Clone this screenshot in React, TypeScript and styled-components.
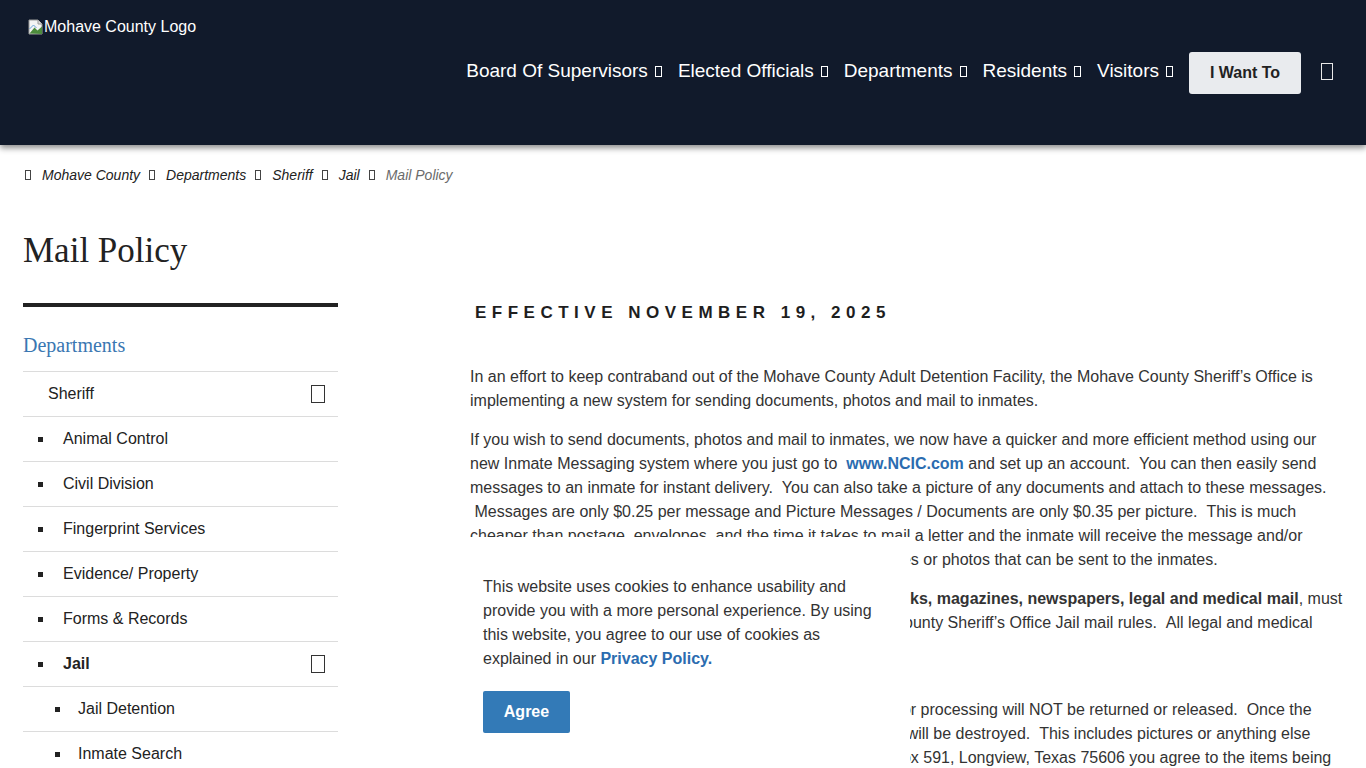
import React from 'react';
import styled, { createGlobalStyle } from 'styled-components';

const GlobalStyle = createGlobalStyle`
  body {
    margin: 0;
    font-family: "Liberation Sans", Arial, sans-serif;
    color: #333;
    background: #fff;
    overflow: hidden;
  }
  * { box-sizing: border-box; }
`;

const Header = styled.header`
  height: 145px;
  background: #111a2b;
  box-shadow: 0 3px 6px rgba(0, 0, 0, 0.45);
  display: flex;
  justify-content: space-between;
  align-items: flex-start;
  padding: 0 33px 0 28px;
  position: relative;
  z-index: 2;
`;

const Logo = styled.div`
  margin-top: 17px;
  display: flex;
  align-items: center;
  color: #fff;
  font-size: 16px;
  line-height: 20px;
`;

const Nav = styled.nav`
  margin-top: 52px;
  height: 42px;
  display: flex;
  align-items: center;
`;

const NavItem = styled.a`
  display: flex;
  align-items: center;
  gap: 7px;
  margin-right: 16px;
  padding-bottom: 4px;
  color: #fff;
  font-size: 19px;
  white-space: nowrap;
  cursor: pointer;
`;

// missing icon-font glyph, drawn as the browser's empty box
const Tofu = styled.span<{ $w: number; $h: number; $color?: string }>`
  display: inline-block;
  flex: none;
  width: ${({ $w }) => $w}px;
  height: ${({ $h }) => $h}px;
  border: 1px solid ${({ $color }) => $color || 'currentColor'};
`;

const WantButton = styled.button`
  width: 112px;
  height: 42px;
  background: #e9ebee;
  border: none;
  border-radius: 3px;
  color: #222;
  font-family: inherit;
  font-size: 16px;
  font-weight: 700;
  cursor: pointer;
`;

const SearchToggle = styled.span`
  margin-left: 20px;
  padding-bottom: 3px;
  display: flex;
  color: #e8e8e8;
`;

const Breadcrumbs = styled.ol`
  list-style: none;
  margin: 0;
  padding: 20px 0 0 25px;
  display: flex;
  align-items: center;
  font-size: 14px;
  line-height: 20px;
  font-style: italic;
`;

const Crumb = styled.li<{ $current?: boolean }>`
  display: flex;
  align-items: center;
  gap: 11px;
  margin-right: 9px;
  color: ${({ $current }) => ($current ? '#6b6b6b' : '#222')};
`;

const PageTitle = styled.h1`
  margin: 46px 0 0 23px;
  font-family: "Liberation Serif", "Times New Roman", serif;
  font-weight: 400;
  font-size: 35px;
  line-height: 40px;
  color: #222;
`;

const Layout = styled.div`
  display: grid;
  grid-template-columns: 315px 1fr;
  column-gap: 132px;
  padding: 0 23px;
  margin-top: 27px;
`;

const Sidebar = styled.aside`
  padding-top: 5px;
`;

const SideBar = styled.div`
  height: 4px;
  background: #222;
`;

const SideTitle = styled.a`
  display: block;
  margin: 26px 0 14px;
  font-family: "Liberation Serif", "Times New Roman", serif;
  font-size: 20px;
  line-height: 24px;
  color: #3a77b2;
`;

const SideList = styled.ul`
  list-style: none;
  margin: 0;
  padding: 0;
`;

const SideRow = styled.li<{ $level: number; $bold?: boolean }>`
  height: 45px;
  border-top: 1px solid #dcdcdc;
  display: flex;
  align-items: center;
  padding-left: ${({ $level }) => ($level === 0 ? 25 : $level === 1 ? 15 : 32)}px;
  padding-right: 13px;
  font-size: 16px;
  font-weight: ${({ $bold }) => ($bold ? 700 : 400)};
  color: #222;
`;

const Bullet = styled.span<{ $space: number }>`
  width: 5px;
  height: 5px;
  background: #222;
  margin-right: ${({ $space }) => $space}px;
  flex: none;
`;

const RowLabel = styled.span`
  flex: 1;
`;

const Content = styled.main`
  padding-top: 1px;
  font-size: 16px;
  line-height: 24px;
  color: #333;
`;

const Effective = styled.h2`
  margin: 0 0 38px;
  padding-left: 5px;
  font-size: 17px;
  line-height: 28px;
  font-weight: 700;
  letter-spacing: 5.5px;
  color: #1e1e1e;
`;

const Para = styled.p`
  margin: 0 0 15px;
`;

const TextLink = styled.a`
  color: #2b6cb0;
  font-weight: 700;
`;

const CookieBanner = styled.div`
  position: fixed;
  left: 455px;
  top: 537px;
  width: 455px;
  height: 260px;
  background: #fff;
  padding: 38px 28px 0;
  font-size: 16px;
  line-height: 24px;
  color: #333;
  z-index: 5;
`;

const AgreeButton = styled.button`
  margin-top: 20px;
  width: 87px;
  height: 42px;
  border: none;
  border-radius: 2px;
  background: #337ab7;
  color: #fff;
  font-family: inherit;
  font-size: 16px;
  font-weight: 700;
`;

const BrokenImage = () => (
  <svg width="16" height="16" viewBox="0 0 16 16">
    <path d="M1 1h9l4 4v10H1z" fill="#f4f4f4" stroke="#9a9a9a" />
    <path d="M10 1v4h4" fill="#ddd" stroke="#9a9a9a" />
    <path d="M1.5 14.5l5-6 3 3 4.5-4v7.5z" fill="#4c8c3c" />
    <path d="M1.5 10l4-4 3 3" fill="none" stroke="#6aa4d8" />
  </svg>
);

const navItems = ['Board Of Supervisors', 'Elected Officials', 'Departments', 'Residents', 'Visitors'];

const crumbs = ['Mohave County', 'Departments', 'Sheriff', 'Jail', 'Mail Policy'];

const sideItems: { label: string; level: number; bold?: boolean; toggle?: boolean }[] = [
  { label: 'Sheriff', level: 0, toggle: true },
  { label: 'Animal Control', level: 1 },
  { label: 'Civil Division', level: 1 },
  { label: 'Fingerprint Services', level: 1 },
  { label: 'Evidence/ Property', level: 1 },
  { label: 'Forms & Records', level: 1 },
  { label: 'Jail', level: 1, bold: true, toggle: true },
  { label: 'Jail Detention', level: 2 },
  { label: 'Inmate Search', level: 2 },
];

const sp = ' \u00a0';

const App = () => {
  return (
    <>
      <GlobalStyle />
      <Header>
        <Logo>
          <BrokenImage />
          Mohave County Logo
        </Logo>
        <Nav>
          {navItems.map((item) => (
            <NavItem key={item}>
              {item}
              <Tofu $w={7} $h={11} />
            </NavItem>
          ))}
          <WantButton>I Want To</WantButton>
          <SearchToggle>
            <Tofu $w={12} $h={17} />
          </SearchToggle>
        </Nav>
      </Header>

      <Breadcrumbs>
        {crumbs.map((c, i) => (
          <Crumb key={c} $current={i === crumbs.length - 1}>
            <Tofu $w={6} $h={10} $color="#444" />
            {c}
          </Crumb>
        ))}
      </Breadcrumbs>

      <PageTitle>Mail Policy</PageTitle>

      <Layout>
        <Sidebar>
          <SideBar />
          <SideTitle>Departments</SideTitle>
          <SideList>
            {sideItems.map((s) => (
              <SideRow key={s.label} $level={s.level} $bold={s.bold}>
                {s.level > 0 && <Bullet $space={s.level === 1 ? 20 : 18} />}
                <RowLabel>{s.label}</RowLabel>
                {s.toggle && <Tofu $w={14} $h={18} $color="#333" />}
              </SideRow>
            ))}
          </SideList>
        </Sidebar>

        <Content>
          <Effective>EFFECTIVE NOVEMBER 19, 2025</Effective>
          <Para>
            In an effort to keep contraband out of the Mohave County Adult Detention Facility, the Mohave
            County Sheriff’s Office is implementing a new system for sending documents, photos and mail to
            inmates.
          </Para>
          <Para>
            If you wish to send documents, photos and mail to inmates, we now have a quicker and more
            efficient method using our new Inmate Messaging system where you just go to{sp}
            <TextLink>www.NCIC.com</TextLink> and set up an account.{sp}You can then easily send messages
            to an inmate for instant delivery.{sp}You can also take a picture of any documents and attach to
            these messages.{sp}Messages are only $0.25 per message and Picture Messages / Documents are only
            $0.35 per picture.{sp}This is much cheaper than postage, envelopes, and the time it takes to mail
            a letter and the inmate will receive the message and/or pictures within the same day.{sp}There
            is no limit to the messages or photos that can be sent to the inmates.
          </Para>
          <Para>
            <strong>All incoming mail, including letters, postcards, notes, books, magazines, newspapers,
            legal and medical mail</strong>, must comply with the mail guidelines, as set forth by the Mohave
            County Sheriff’s Office Jail mail rules.{sp}All legal and medical mail must be clearly marked.
            <br />
            Please review the rules below.
          </Para>
          <Para>
            Any mail sent to the facility, which does not meet the criteria for processing will NOT be
            returned or released.{sp}Once the mail has been scanned into the system, the original mail item
            will be destroyed.{sp}This includes pictures or anything else sent.{sp}By sending it to: NCIC
            Inmate Communications, P.O. Box 591, Longview, Texas 75606 you agree to the items being
            destroyed after scanning.
          </Para>
        </Content>
      </Layout>

      <CookieBanner>
        This website uses cookies to enhance usability and provide you with a more personal experience. By
        using this website, you agree to our use of cookies as explained in our{' '}
        <TextLink>Privacy Policy.</TextLink>
        <div>
          <AgreeButton>Agree</AgreeButton>
        </div>
      </CookieBanner>
    </>
  );
};

export default App;
